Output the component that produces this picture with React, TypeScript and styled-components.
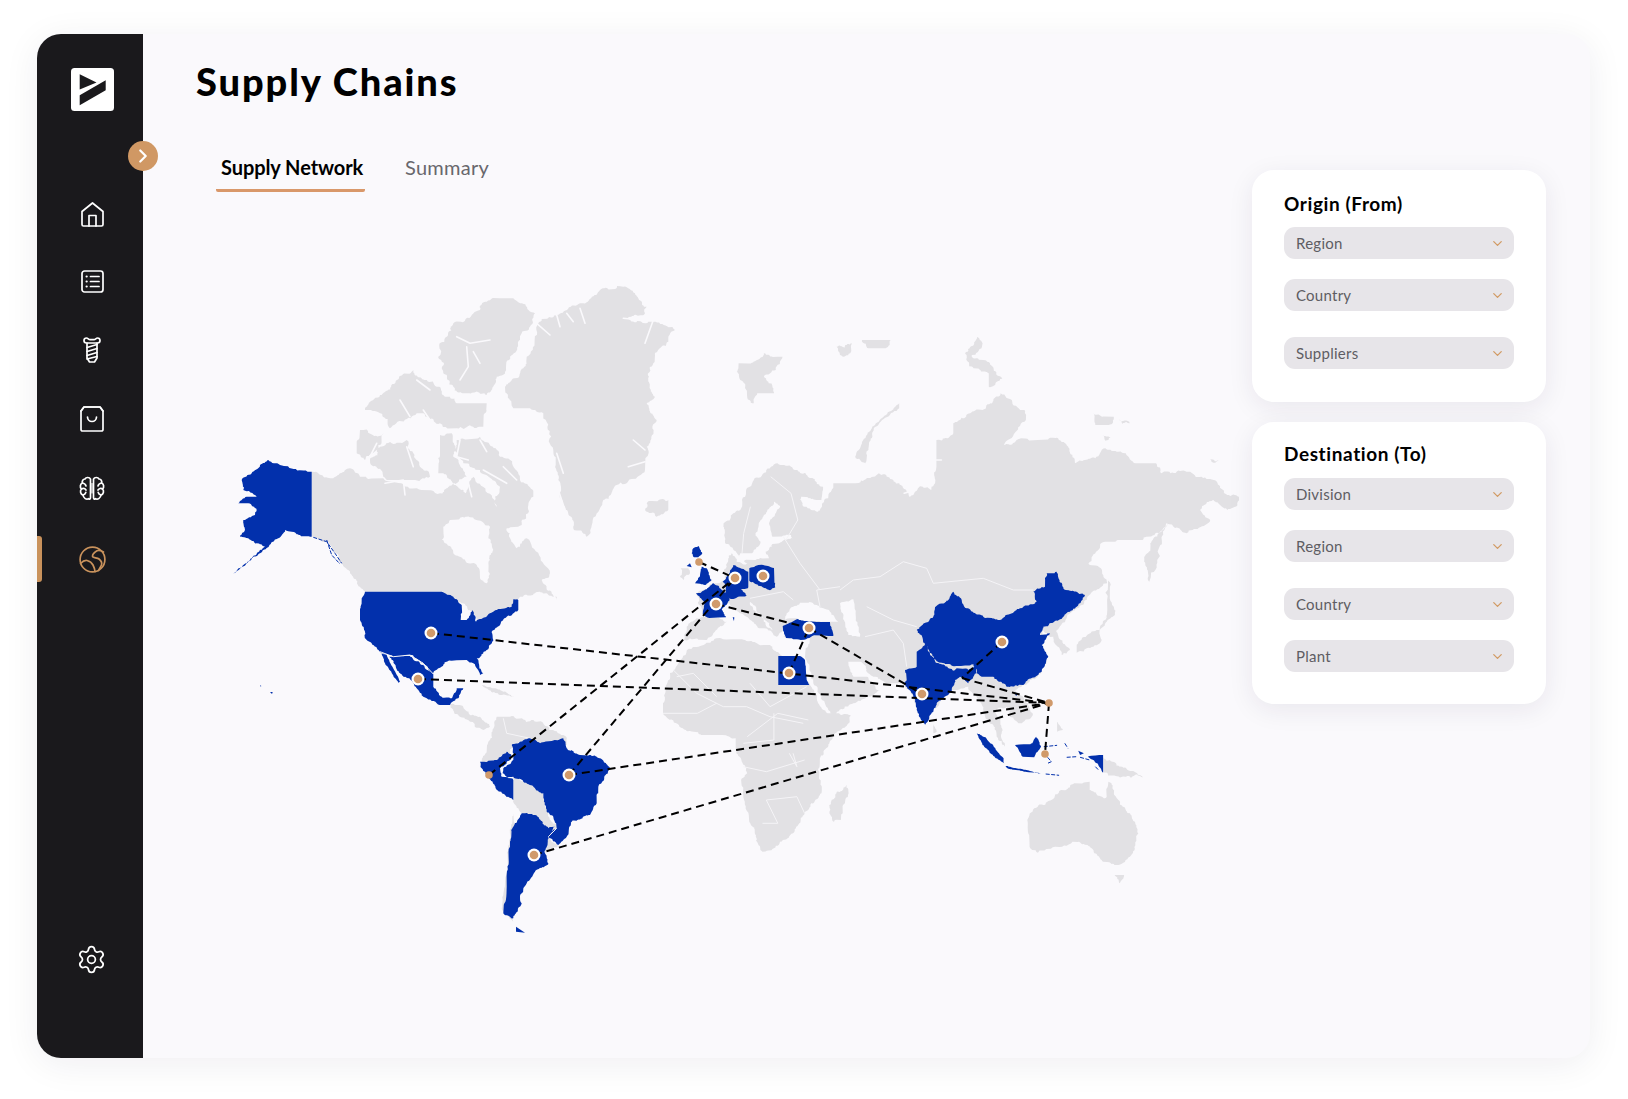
import React from 'react';
import styled, { createGlobalStyle } from 'styled-components';
import { ChevronDown, ChevronRight, Settings } from 'lucide-react';

const Global = createGlobalStyle`
  html, body { margin: 0; padding: 0; background: #ffffff; }
  body { width: 1628px; height: 1099px; overflow: hidden; font-family: "Lato", "Noto Sans", sans-serif; }
  * { box-sizing: border-box; }
`;

const Card = styled.div`
  margin: 34px 38px 0 37px;
  width: 1553px;
  height: 1024px;
  display: flex;
  border-radius: 24px;
  background: #faf9fc;
  box-shadow: 0 6px 36px rgba(30, 20, 50, 0.07);
`;

const Sidebar = styled.aside`
  position: relative;
  width: 106px;
  flex: none;
  display: flex;
  flex-direction: column;
  align-items: center;
  background: #1a191c;
  border-radius: 24px 0 0 24px;
  padding-top: 34px;
`;

const LogoBox = styled.svg`
  width: 43px;
  height: 43px;
  display: block;
  margin-left: 4px;
`;

const CollapseButton = styled.div`
  position: absolute;
  top: 107px;
  right: -15px;
  width: 30px;
  height: 30px;
  border-radius: 50%;
  background: #d09864;
  color: #fff;
  display: flex;
  align-items: center;
  justify-content: center;
  z-index: 2;
`;

const NavList = styled.nav`
  margin-top: 70px;
  width: 100%;
  display: flex;
  flex-direction: column;
  flex: 1;
`;

const NavItem = styled.div<{ $h: number; $active?: boolean }>`
  position: relative;
  height: ${(p) => p.$h}px;
  width: 100%;
  display: flex;
  align-items: center;
  justify-content: center;
  padding-left: 4px;
  color: ${(p) => (p.$active ? '#c9925c' : '#ffffff')};
`;

const ActiveMark = styled.span`
  position: absolute;
  left: 0;
  top: 12px;
  width: 5px;
  height: 46px;
  border-radius: 0 3px 3px 0;
  background: #c9925c;
`;

const SettingsSlot = styled.div`
  margin-top: auto;
  margin-bottom: 83px;
  display: flex;
  justify-content: center;
  color: #fff;
  padding-left: 2px;
`;

const Main = styled.main`
  flex: 1;
  min-width: 0;
  display: flex;
  flex-direction: column;
  border-radius: 0 24px 24px 0;
  padding-top: 25px;
`;

const Title = styled.h1`
  margin: 0 0 47px 53px;
  font-size: 38px;
  line-height: 44px;
  font-weight: 900;
  letter-spacing: 1.9px;
  color: #000;
`;

const Body = styled.div`
  flex: 1;
  display: flex;
  align-items: flex-start;
`;

const MapColumn = styled.section`
  width: 1109px;
  flex: none;
`;

const Tabs = styled.div`
  display: flex;
  height: 42px;
  padding-left: 73px;
`;

const Tab = styled.div<{ $active?: boolean; $w: number }>`
  width: ${(p) => p.$w}px;
  height: 42px;
  padding: 5px 0 0 5px;
  font-size: 20px;
  line-height: 24px;
  font-weight: ${(p) => (p.$active ? 700 : 400)};
  letter-spacing: ${(p) => (p.$active ? '-0.08px' : '0.28px')};
  white-space: nowrap;
  color: ${(p) => (p.$active ? '#000' : '#68676c')};
  border-bottom: 3px solid ${(p) => (p.$active ? '#d9986a' : 'transparent')};
  border-radius: 0 0 2px 2px;
`;

const TabGap = styled.div`
  width: 35px;
`;

const MapCanvas = styled.svg`
  display: block;
  width: 1109px;
  height: 800px;
`;

const Land = styled.path`
  fill: #e2e1e4;
`;

const Water = styled.path`
  fill: #faf9fc;
`;

const Inlet = styled.path`
  fill: none;
  stroke: #faf9fc;
  stroke-width: 1.6;
  stroke-linejoin: round;
  stroke-linecap: round;
`;

const Border = styled.path`
  fill: none;
  stroke: #f5f4f7;
  stroke-width: 1;
  stroke-linejoin: round;
`;

const Country = styled.path`
  fill: #0230ac;
`;

const CoastThread = styled.path`
  fill: none;
  stroke: #0230ac;
  stroke-width: 1;
  stroke-dasharray: 4 1.5;
`;

const Route = styled.line`
  stroke: #000;
  stroke-width: 2;
  stroke-dasharray: 8 5;
`;

const NodeRing = styled.circle`
  fill: #fff;
`;

const NodeDot = styled.circle`
  fill: #d09a6b;
`;

const SideColumn = styled.div`
  width: 294px;
  flex: none;
  margin-top: 20px;
  display: flex;
  flex-direction: column;
  gap: 20px;
`;

const Panel = styled.section<{ $pt: number; $h: number }>`
  height: ${(p) => p.$h}px;
  padding: ${(p) => p.$pt}px 32px 0 32px;
  background: #fff;
  border-radius: 22px;
  box-shadow: 0 6px 26px rgba(40, 30, 70, 0.08);
`;

const PanelTitle = styled.h2`
  margin: 0;
  font-size: 19px;
  line-height: 24px;
  font-weight: 700;
  letter-spacing: 0.6px;
  color: #000;
`;

const Select = styled.div<{ $mt: number }>`
  margin-top: ${(p) => p.$mt}px;
  height: 32px;
  width: 230px;
  display: flex;
  align-items: center;
  justify-content: space-between;
  padding: 0 9px 0 12px;
  border-radius: 11px;
  background: #e7e5e9;
  font-size: 15px;
  letter-spacing: 0.25px;
  color: #5e5d63;
`;

const Caret = styled(ChevronDown)`
  color: #d19a63;
  flex: none;
`;

const LineIcon = styled.svg`
  display: block;
  fill: none;
  stroke: currentColor;
  stroke-width: 1.7;
  stroke-linecap: round;
  stroke-linejoin: round;
`;

type Pt = [number, number];
type Frame = [number, number, number];
const Z4: Frame = [220, 440, 3];
const Z5: Frame = [640, 520, 3];
const Z7: Frame = [640, 680, 2.613];
const Z9: Frame = [340, 280, 3];
const Z10: Frame = [720, 320, 2.958];
const Z11: Frame = [670, 530, 3];

const conv = (o: Frame, a: number[]): Pt[] => {
  const out: Pt[] = [];
  for (let i = 0; i < a.length; i += 2) out.push([o[0] + a[i] / o[2], o[1] + a[i + 1] / 3]);
  return out;
};

let seed = 12345;
const rnd = () => {
  seed = (seed * 1103515245 + 12345) & 0x7fffffff;
  return seed / 0x7fffffff - 0.5;
};

const rough = (pts: Pt[], amp: number): Pt[] => {
  if (amp === 0) return pts;
  let cur = pts;
  for (let it = 0; it < 4; it++) {
    const next: Pt[] = [];
    cur.forEach((p, i) => {
      const q = cur[(i + 1) % cur.length];
      const dx = q[0] - p[0];
      const dy = q[1] - p[1];
      const len = Math.hypot(dx, dy);
      next.push(p);
      const straight = Math.abs(dx) < 0.4 || Math.abs(dy) < 0.4;
      if (len > 2 && !straight) {
        const d = Math.min(len * 0.24, amp) * rnd() * 2;
        next.push([(p[0] + q[0]) / 2 - (dy / len) * d, (p[1] + q[1]) / 2 + (dx / len) * d]);
      }
    });
    cur = next;
  }
  return cur;
};

const toD = (pts: Pt[], close = true) =>
  'M' + pts.map((p) => `${p[0].toFixed(1)} ${p[1].toFixed(1)}`).join('L') + (close ? 'Z' : '');

const area = (o: Frame, a: number[], amp = 2.2) => toD(rough(conv(o, a), amp));
const blue = (o: Frame, a: number[], amp = 0.9) => toD(rough(conv(o, a), amp));
const line = (o: Frame, a: number[]) => toD(conv(o, a), false);

const eurasia: Pt[] = [
  ...conv(Z10, [
    10, 620, 60, 570, 100, 480, 170, 430, 210, 440, 260, 470, 305, 500, 300, 540, 240, 530, 250, 560, 290, 575, 320,
    535, 335, 490, 400, 490, 470, 460, 530, 490, 560, 530, 600, 500, 625, 510, 640, 440, 640, 360, 690, 340, 690, 310,
    740, 280, 800, 250, 830, 220, 900, 270, 905, 300, 840, 375, 890, 355, 940, 360, 1000, 355, 1030, 380, 1050, 430,
    1110, 415, 1140, 385, 1200, 400, 1230, 430, 1290, 430, 1305, 460, 1380, 455, 1460, 480, 1500, 525, 1535, 530, 1530,
    550, 1500, 570, 1460, 540, 1420, 570, 1450, 600, 1380, 640, 1320, 610, 1300, 640, 1250, 660, 1190, 660, 1140, 665,
    1090, 730, 1130, 750, 1145, 790,
  ]),
  ...conv(Z5, [
    1340, 240, 1290, 280, 1250, 330, 1290, 390, 1265, 405, 1240, 350, 1210, 330, 1205, 375, 1225, 410, 1205, 455, 1150,
    495, 1125, 510, 1165, 550, 1175, 590, 1140, 610, 1110, 590, 1100, 560, 1070, 570, 1085, 640, 1095, 680, 1070, 650,
    1050, 610, 1020, 540, 985, 500, 940, 510, 880, 570, 855, 615, 820, 530, 790, 490, 740, 490, 700, 470, 660, 425,
    625, 425, 640, 470, 680, 470, 720, 510, 640, 550, 580, 590, 565, 570, 520, 490, 495, 410, 510, 345, 430, 350,
  ]),
  ...conv(Z11, [
    345, 300, 320, 320, 300, 290, 250, 225, 240, 215, 250, 240, 310, 310, 280, 295, 240, 270, 205, 245, 180, 225, 170,
    215, 135, 262, 170, 275, 130, 310, 110, 330, 60, 325, 40, 330, 50, 290, 80, 265, 105, 260, 78, 190, 110, 180, 130,
    160, 165, 150, 170, 110, 185, 70, 200, 95, 215, 100, 240, 105,
  ]),
  ...conv(Z10, [60, 710, 40, 690, 15, 670]),
];

const hub: Pt = [1049, 703];
const usa: Pt = [431, 633];
const mexico: Pt = [418, 679];
const peru: Pt = [489, 775];
const brazil: Pt = [569, 775];
const argentina: Pt = [534, 855];
const scotland: Pt = [699, 562];
const germany: Pt = [735, 578];
const poland: Pt = [763, 576];
const france: Pt = [716, 604];
const turkey: Pt = [809, 628];
const egypt: Pt = [789, 673];
const india: Pt = [922, 694];
const china: Pt = [1002, 642];
const indonesia: Pt = [1045, 754];
const bangla: Pt = [962, 678];

const routes: [Pt, Pt][] = [
  [usa, hub],
  [mexico, hub],
  [brazil, hub],
  [argentina, hub],
  [peru, germany],
  [brazil, germany],
  [scotland, germany],
  [france, turkey],
  [turkey, india],
  [egypt, turkey],
  [china, bangla],
  [bangla, hub],
  [hub, indonesia],
];

const ringed: Pt[] = [usa, mexico, brazil, argentina, germany, poland, france, turkey, egypt, india, china];
const plain: Pt[] = [peru, scotland, hub, indonesia];

const grayShapes: string[] = [
  // Greenland
  area(Z9, [780, 30, 850, 20, 885, 40, 920, 80, 915, 100, 860, 115, 925, 125, 1005, 150, 985, 185, 945, 225, 925, 300, 945, 350, 920, 370, 950, 420, 920, 500, 915, 570, 830, 615, 790, 660, 740, 770, 700, 745, 675, 680, 655, 600, 640, 510, 610, 400, 570, 385, 520, 385, 495, 320, 540, 280, 560, 230, 595, 130, 650, 105, 720, 70], 3),
  // Arctic Canada
  area(Z9, [340, 130, 420, 90, 440, 65, 520, 55, 585, 100, 545, 160, 510, 230, 470, 290, 440, 345, 380, 340, 340, 320, 310, 280, 295, 230, 320, 170], 4),
  area(Z9, [220, 270, 260, 300, 290, 320, 330, 350, 350, 370, 440, 370, 430, 440, 350, 445, 300, 430, 230, 400, 150, 445, 120, 400, 75, 390, 120, 345, 170, 300], 4),
  area(Z9, [60, 450, 130, 460, 110, 510, 75, 540, 50, 520], 3),
  area(Z9, [120, 500, 200, 480, 240, 560, 270, 590, 180, 600, 130, 590, 90, 540], 4),
  area(Z9, [300, 465, 335, 460, 340, 530, 380, 590, 340, 610, 295, 580, 300, 520], 3),
  area(Z9, [350, 480, 420, 470, 480, 530, 540, 600, 580, 650, 540, 730, 470, 680, 480, 620, 420, 570, 370, 550, 340, 510], 4),
  // Mainland Canada
  toD(rough([
    ...conv(Z4, [275, 95, 340, 115]),
    ...conv(Z9, [0, 580, 30, 565, 60, 590, 130, 595, 190, 615, 300, 640, 340, 610, 375, 640, 400, 590, 470, 680, 530, 690, 545, 735, 500, 745, 530, 805, 560, 775, 630, 880, 605, 900, 650, 960]),
    ...conv(Z4, [1010, 470, 960, 455, 900, 470, 880, 500, 850, 520, 770, 545, 760, 520, 725, 490, 665, 455, 435, 455, 420, 440, 390, 400, 365, 370, 320, 305, 275, 290]),
  ], 1.6)),
  // Iceland, Svalbard, Russian Arctic islands
  area(Z9, [920, 670, 985, 660, 985, 690, 950, 710, 915, 690]),
  area(Z10, [55, 130, 110, 120, 130, 100, 185, 110, 165, 150, 130, 170, 160, 220, 110, 220, 100, 250, 80, 225, 60, 180], 3),
  area(Z10, [530, 250, 510, 270, 450, 320, 420, 370, 400, 410, 430, 430, 440, 380, 460, 320, 530, 265], 1),
  area(Z10, [760, 50, 775, 80, 745, 105, 790, 125, 835, 175, 795, 200, 795, 160, 750, 145, 725, 100]),
  area(Z10, [345, 80, 390, 70, 385, 100, 355, 105], 3),
  area(Z10, [420, 60, 505, 60, 490, 85, 440, 85], 3),
  area(Z10, [1105, 280, 1165, 290, 1150, 315, 1110, 315]),
  area(Z10, [1180, 298, 1212, 310, 1190, 312]),
  area(Z10, [1130, 345, 1155, 352, 1140, 362]),
  area(Z10, [1450, 418, 1478, 422, 1460, 428]),
  // Kamchatka, Sakhalin, Japan
  area(Z10, [1325, 610, 1300, 680, 1270, 785, 1255, 720, 1280, 660]),
  area(Z10, [1148, 755, 1165, 860, 1168, 885, 1135, 895, 1145, 840]),
  area(Z5, [1420, 280, 1380, 320, 1385, 360, 1310, 398, 1310, 380, 1370, 330]),
  // Eurasia
  toD(rough(eurasia, 1.6)),
  // UK Ireland
  area(Z11, [32, 115, 55, 115, 60, 130, 40, 150, 30, 140]),
  // Africa
  toD(rough([
    [720, 638], [745, 640], [770, 645], [778, 652], [810, 685], [818, 703],
    ...conv(Z7, [490, 100, 550, 105, 545, 130, 500, 180, 470, 235, 465, 270, 475, 320, 470, 345, 430, 400, 400, 460, 350, 505, 320, 515, 300, 460, 285, 420, 265, 310, 280, 280, 250, 210, 250, 175, 215, 165, 160, 165, 120, 150, 60, 100, 60, 70]),
    [670, 673], [693, 647],
  ], 1.4)),
  area(Z7, [540, 315, 545, 340, 525, 420, 505, 425, 497, 390, 510, 345]),
  // Sri Lanka, Philippines, New Guinea, Australia
  area(Z5, [880, 612, 890, 635, 880, 640], 0.5),
  area(Z7, [1090, 125, 1105, 150, 1090, 155], 0.5),
  area(Z7, [1210, 228, 1260, 260, 1315, 292, 1270, 290, 1210, 275]),
  area(Z7, [1135, 310, 1175, 305, 1175, 330, 1215, 355, 1225, 305, 1250, 360, 1280, 400, 1302, 460, 1280, 530, 1250, 555, 1210, 545, 1180, 505, 1130, 485, 1040, 518, 1025, 510, 1012, 420, 1030, 385, 1075, 360, 1100, 330], 1.5),
  area(Z7, [1240, 585, 1265, 585, 1252, 610], 0.8),
  // Central America & Caribbean
  area(Z4, [690, 790, 720, 795, 760, 825, 810, 860, 790, 870, 745, 840, 700, 812]),
  area(Z4, [785, 735, 850, 755, 885, 770, 840, 765], 1),
  // South America
  area(Z4, [830, 830, 870, 830, 950, 845, 1030, 885, 1040, 915, 960, 910, 930, 895, 880, 920, 870, 950, 820, 965, 785, 965, 810, 900]),
  area(Z4, [880, 1010, 970, 1060, 985, 1120, 1010, 1165, 985, 1190, 1020, 1215, 975, 1240, 960, 1160, 900, 1115, 880, 1080]),
  area(Z4, [880, 1120, 868, 1200, 860, 1300, 845, 1405, 880, 1445, 862, 1300, 885, 1160], 0.8),
];

const waterShapes: string[] = [
  area(Z9, [330, 720, 380, 710, 450, 740, 445, 775, 460, 810, 450, 840, 440, 910, 420, 895, 410, 855, 340, 820, 305, 780, 310, 740], 1.5),
  area(Z10, [105, 720, 145, 715, 135, 695, 155, 672, 215, 655, 210, 645, 155, 650, 145, 610, 178, 560, 160, 545, 130, 585, 105, 640, 120, 665, 95, 700, 60, 700, 50, 725], 1.2),
  area(Z5, [440, 280, 480, 248, 530, 255, 570, 275, 595, 305, 560, 305, 470, 295, 435, 300], 1.2),
  area(Z5, [600, 250, 640, 238, 660, 350, 625, 345, 610, 290], 1),
];

const inlets: string[] = [
  line(Z9, [590, 130, 630, 165]),
  line(Z9, [650, 105, 660, 140]),
  line(Z9, [680, 100, 700, 125]),
  line(Z9, [720, 85, 735, 130]),
  line(Z9, [850, 115, 900, 120]),
  line(Z9, [940, 120, 915, 190]),
  line(Z9, [880, 480, 915, 510]),
  line(Z9, [865, 560, 915, 545]),
  line(Z9, [650, 520, 670, 580]),
  line(Z9, [655, 630, 675, 690]),
  line(Z9, [350, 170, 390, 190, 450, 180]),
  line(Z9, [380, 200, 385, 260, 360, 300]),
  line(Z9, [400, 215, 420, 250]),
  line(Z9, [180, 360, 210, 410]),
  line(Z9, [230, 300, 270, 330]),
  line(Z9, [250, 390, 270, 420]),
  line(Z9, [135, 610, 190, 600, 195, 645]),
  line(Z9, [385, 610, 395, 650]),
  line(Z9, [430, 570, 500, 610]),
  line(Z9, [110, 490, 90, 530]),
  line(Z9, [200, 500, 220, 560]),
  line(Z9, [360, 480, 350, 530, 385, 540]),
  line(Z9, [420, 480, 440, 515]),
  line(Z9, [490, 560, 530, 600]),
  line(Z10, [580, 400, 600, 420, 655, 420]),
  line(Z10, [545, 520, 580, 510, 590, 475]),
];

const borders: string[] = [
  line(Z5, [600, 210, 640, 180, 720, 170, 790, 125, 860, 145, 880, 190, 1030, 175, 1120, 210, 1180, 210]),
  line(Z5, [680, 260, 760, 300, 830, 320]),
  line(Z5, [675, 350, 760, 330, 790, 370, 800, 440]),
  line(Z5, [600, 200, 530, 210, 540, 260]),
  line(Z5, [430, 50, 480, 130, 540, 210]),
  line(Z5, [330, 235, 430, 215, 460, 240]),
  line(Z10, [150, 470, 210, 520, 230, 600, 195, 660]),
  line(Z10, [90, 560, 70, 640, 65, 700]),
  line(Z7, [60, 100, 150, 100, 200, 70]),
  line(Z7, [270, 190, 350, 180, 350, 100]),
  line(Z7, [330, 360, 360, 430, 320, 430]),
  line(Z7, [330, 360, 410, 350, 430, 400]),
  line(Z7, [390, 220, 410, 260, 400, 220]),
  line(Z7, [270, 260, 330, 275, 430, 240]),
  line(Z7, [280, 170, 360, 100, 440, 120]),
  line(Z5, [100, 450, 170, 520, 250, 560, 320, 560, 390, 590, 490, 610]),
  line(Z5, [330, 490, 390, 560, 500, 500]),
  line(Z4, [1370, 710, 1420, 700, 1490, 770]),
  line(Z4, [850, 835, 860, 880, 930, 895]),
];

const blueShapes: string[] = [
  // Alaska
  blue(Z4, [145, 60, 180, 75, 275, 95, 275, 290, 240, 285, 215, 275, 195, 270, 175, 295, 130, 330, 90, 360, 40, 400, 95, 355, 135, 320, 110, 310, 85, 295, 60, 290, 75, 270, 70, 240, 105, 225, 110, 210, 85, 190, 55, 190, 80, 170, 110, 170, 70, 150, 65, 120, 95, 100, 120, 75]),
  // USA
  blue(Z4, [435, 455, 665, 455, 700, 470, 725, 495, 722, 540, 740, 540, 758, 510, 768, 545, 830, 510, 875, 500, 880, 478, 895, 480, 895, 510, 860, 530, 840, 555, 815, 575, 820, 600, 790, 640, 770, 655, 790, 700, 780, 705, 760, 670, 740, 660, 680, 665, 640, 700, 610, 670, 570, 645, 520, 650, 480, 635, 440, 600, 420, 540, 425, 475]),
  // Mexico
  blue(Z4, [508, 650, 570, 648, 610, 675, 640, 703, 640, 740, 665, 770, 695, 775, 710, 745, 730, 745, 715, 775, 690, 795, 650, 790, 610, 770, 580, 730, 540, 700]),
  blue(Z4, [485, 640, 500, 645, 540, 725, 535, 728, 495, 670], 0.4),
  blue(Z4, [120, 735, 124, 738, 122, 740], 0),
  blue(Z4, [150, 756, 158, 756, 156, 762], 0),
  // Ecuador & Peru
  blue(Z4, [780, 965, 830, 960, 860, 935, 880, 950, 840, 985, 845, 1010, 880, 1020, 880, 1080, 830, 1050, 805, 1010, 785, 985]),
  // Brazil
  blue(Z4, [875, 915, 930, 895, 960, 910, 1030, 895, 1040, 925, 1080, 945, 1130, 950, 1170, 985, 1135, 1040, 1130, 1090, 1110, 1125, 1055, 1145, 1040, 1190, 1015, 1215, 985, 1190, 1010, 1165, 1000, 1130, 980, 1115, 970, 1060, 910, 1025, 880, 1010, 860, 1015, 848, 1000, 850, 985, 880, 960]),
  // Argentina
  blue(Z4, [905, 1120, 945, 1125, 985, 1165, 1005, 1160, 985, 1190, 975, 1240, 985, 1270, 945, 1295, 920, 1330, 900, 1370, 905, 1390, 880, 1435, 850, 1420, 860, 1340, 870, 1220, 880, 1160]),
  blue(Z4, [888, 1460, 915, 1478, 888, 1475], 0),
  // Europe
  blue(Z11, [70, 55, 85, 48, 97, 70, 85, 82, 72, 82, 65, 70], 0.5),
  blue(Z11, [50, 108, 60, 100, 65, 112], 0),
  blue(Z11, [95, 110, 110, 115, 125, 150, 105, 165, 75, 160, 90, 135], 0.6),
  blue(Z11, [110, 178, 130, 160, 172, 192, 178, 212, 155, 240, 168, 262, 118, 264, 98, 252, 103, 215, 78, 190], 0.6),
  blue(Z11, [190, 105, 215, 116, 235, 125, 235, 172, 212, 178, 230, 196, 190, 207, 163, 197, 168, 165, 158, 155, 178, 130], 0.6),
  blue(Z11, [238, 115, 275, 104, 312, 114, 316, 172, 300, 181, 265, 167, 238, 152], 0.6),
  blue(Z11, [188, 262, 193, 262, 192, 274], 0),
  // Turkey & Egypt
  blue(Z5, [428, 318, 470, 298, 530, 306, 570, 306, 580, 348, 522, 346, 482, 360, 438, 354], 0.6),
  blue(Z5, [415, 408, 480, 408, 495, 420, 500, 480, 508, 495, 415, 495], 0.3),
  // India
  blue(Z5, [860, 370, 870, 405, 885, 422, 942, 452, 950, 445, 985, 450, 1015, 430, 1010, 460, 985, 490, 960, 470, 945, 480, 935, 515, 890, 550, 880, 575, 855, 615, 830, 570, 820, 530, 790, 490, 800, 480, 795, 450, 830, 440, 830, 395]),
  // China
  blue(Z5, [940, 215, 965, 240, 980, 265, 1030, 290, 1080, 300, 1140, 265, 1190, 245, 1180, 215, 1215, 200, 1220, 160, 1250, 155, 1270, 205, 1335, 225, 1310, 260, 1270, 290, 1210, 320, 1200, 345, 1230, 340, 1205, 375, 1225, 410, 1205, 455, 1150, 495, 1100, 500, 1060, 470, 1025, 470, 1000, 432, 950, 438, 890, 424, 865, 388, 830, 330, 880, 290, 885, 262, 925, 240]),
  blue(Z5, [1124, 518, 1136, 520, 1128, 528], 0),
  // Indonesia
  blue(Z7, [880, 160, 905, 175, 950, 235, 952, 250, 930, 235, 895, 195], 0.5),
  blue(Z7, [980, 195, 1025, 190, 1035, 170, 1048, 200, 1030, 232, 1000, 230], 0.6),
  blue(Z7, [955, 258, 1000, 268, 1050, 282, 1005, 275, 960, 265], 0.3),
  blue(Z7, [1170, 230, 1210, 225, 1210, 278, 1195, 250], 0.5),
  blue(Z7, [1145, 212, 1160, 220, 1150, 225], 0),
];

const threads: string[] = [
  line(Z4, [280, 292, 320, 305, 345, 340, 365, 370]),
  line(Z4, [320, 300, 335, 345, 360, 372]),
  line(Z7, [1065, 232, 1075, 245, 1065, 250]),
  line(Z7, [1055, 200, 1090, 196]),
  line(Z7, [1115, 232, 1140, 230]),
  line(Z7, [1110, 190, 1118, 205]),
  line(Z7, [1060, 282, 1095, 286]),
  line(Z7, [1150, 232, 1175, 240]),
  line(Z7, [1190, 260, 1200, 272]),
];

const usBorderLines: string[] = [
  line(Z4, [480, 635, 520, 650, 570, 645, 610, 670, 640, 702]),
  line(Z4, [985, 1190, 1010, 1165]),
];

const MapDrawing = () => (
  <MapCanvas viewBox="143 192 1109 800" role="img" aria-label="World map of supply routes">
    {grayShapes.map((d, i) => (
      <Land key={i} d={d} />
    ))}
    {waterShapes.map((d, i) => (
      <Water key={i} d={d} />
    ))}
    {inlets.map((d, i) => (
      <Inlet key={i} d={d} />
    ))}
    {borders.map((d, i) => (
      <Border key={i} d={d} />
    ))}
    {blueShapes.map((d, i) => (
      <Country key={i} d={d} />
    ))}
    {threads.map((d, i) => (
      <CoastThread key={i} d={d} />
    ))}
    {usBorderLines.map((d, i) => (
      <Border key={i} d={d} />
    ))}
    {routes.map(([a, b], i) => (
      <Route key={i} x1={a[0]} y1={a[1]} x2={b[0]} y2={b[1]} />
    ))}
    {ringed.map((p, i) => (
      <g key={i}>
        <NodeRing cx={p[0]} cy={p[1]} r={6.5} />
        <NodeDot cx={p[0]} cy={p[1]} r={4.3} />
      </g>
    ))}
    {plain.map((p, i) => (
      <NodeDot key={i} cx={p[0]} cy={p[1]} r={3.8} />
    ))}
  </MapCanvas>
);

const Logo = () => (
  <LogoBox viewBox="0 0 43 43">
    <rect width="43" height="43" rx="3.5" fill="#fff" />
    <path d="M8.7 6.3 L25.5 14.6 L8.7 21.6 Z M8.7 27.3 L34.7 12.3 V22.3 L8.7 37.3 Z" fill="#1a191c" />
  </LogoBox>
);

const HomeIcon = () => (
  <LineIcon width="23" height="25" viewBox="0 0 23 25">
    <path d="M1 9.5 L11.5 1 L22 9.5 V22.5 a1.5 1.5 0 0 1 -1.5 1.5 H2.5 A1.5 1.5 0 0 1 1 22.5 Z" />
    <path d="M8 24 V13.5 H15 V24" />
  </LineIcon>
);

const ListIcon = () => (
  <LineIcon width="23" height="23" viewBox="0 0 23 23">
    <rect x="1" y="1" width="21" height="21" rx="2.5" />
    <path d="M9.5 6.5 H18 M9.5 11.5 H18 M9.5 16.5 H18" />
    <path d="M5.6 6.5 H5.7 M5.6 11.5 H5.7 M5.6 16.5 H5.7" strokeWidth="2.2" />
  </LineIcon>
);

const ScrewIcon = () => (
  <LineIcon width="18" height="26" viewBox="0 0 18 26">
    <path d="M3.5 1 C2 1 1 2 1 3.6 C1 5.2 2 6 3.5 6 H14.5 C16 6 17 5.2 17 3.6 C17 2 16 1 14.5 1 C13 1 12.5 2.6 11 2.6 H7 C5.5 2.6 5 1 3.5 1 Z" />
    <path d="M4 6 V21 L6.5 25 H11.5 L14 21 V6" />
    <path d="M4 10.5 L14 7.5 M4 14.5 L14 11.5 M4 18.5 L14 15.5 M4 22 L14 19.5" />
  </LineIcon>
);

const BagIcon = () => (
  <LineIcon width="24" height="26" viewBox="0 0 24 26">
    <path d="M4 1 H20 L23 5 V23.5 a1.5 1.5 0 0 1 -1.5 1.5 H2.5 A1.5 1.5 0 0 1 1 23.5 V5 Z" />
    <path d="M1 5 L4 1 H20 L23 5" />
    <path d="M7.5 11 a4.5 4.5 0 0 0 9 0" />
  </LineIcon>
);

const brainLobe =
  'M11.5 3.2 C10.5 1.2 7.2 0.8 6 3 C4 3 2.8 5 3.4 7 C1.2 8 0.6 11 2.4 13 C0.8 15 1.4 18.4 4 19 C4.4 22.2 7.6 24.2 9.6 22.6 C10.6 23.8 11.5 23 11.5 21.6 Z';

const BrainIcon = () => (
  <LineIcon width="26" height="25" viewBox="0 0 26 25">
    <path d={brainLobe} />
    <path d={brainLobe} transform="matrix(-1 0 0 1 26 0)" />
    <path d="M3.4 7 C5 7.2 6.6 8.2 7 10 M2.4 13 C4 12 6 12.4 7 14 M4 19 C5.2 18.6 6.4 17.6 6.8 16.4" />
    <path d="M22.6 7 C21 7.2 19.4 8.2 19 10 M23.6 13 C22 12 20 12.4 19 14 M22 19 C20.8 18.6 19.6 17.6 19.2 16.4" />
    <path d="M13 7.5 V17" strokeWidth="1.2" />
  </LineIcon>
);

const GlobeIcon = () => (
  <LineIcon width="27" height="27" viewBox="0 0 27 27">
    <circle cx="13.5" cy="13.5" r="12.4" />
    <path d="M1.5 17.5 C3.5 15.5 5.5 14 8 14.5 C11 15.2 13 17 14 19 C15 21 15.8 23 16 25.5" />
    <path d="M24.5 6 C22 4.6 19.5 4 18 4.8 C16 6 13.5 8.5 13.5 10.2 C13.5 12 18 11.5 20 13 C22.5 15 23 17.5 22.5 19 C22 20.5 20.5 22 19.5 24.5" />
  </LineIcon>
);

const App = () => (
  <>
    <Global />
    <Card>
      <Sidebar>
        <Logo />
        <CollapseButton>
          <ChevronRight size={22} strokeWidth={2.4} />
        </CollapseButton>
        <NavList>
          <NavItem $h={67}>
            <HomeIcon />
          </NavItem>
          <NavItem $h={66}>
            <ListIcon />
          </NavItem>
          <NavItem $h={72}>
            <ScrewIcon />
          </NavItem>
          <NavItem $h={66}>
            <BagIcon />
          </NavItem>
          <NavItem $h={72}>
            <BrainIcon />
          </NavItem>
          <NavItem $h={70} $active>
            <ActiveMark />
            <GlobeIcon />
          </NavItem>
          <SettingsSlot>
            <Settings size={31} strokeWidth={1.35} />
          </SettingsSlot>
        </NavList>
      </Sidebar>
      <Main>
        <Title>Supply Chains</Title>
        <Body>
          <MapColumn>
            <Tabs>
              <Tab $active $w={149}>
                Supply Network
              </Tab>
              <TabGap />
              <Tab $w={100}>Summary</Tab>
            </Tabs>
            <MapDrawing />
          </MapColumn>
          <SideColumn>
            <Panel $pt={22} $h={232}>
              <PanelTitle>Origin (From)</PanelTitle>
              <Select $mt={11}>
                Region
                <Caret size={15} strokeWidth={2} />
              </Select>
              <Select $mt={20}>
                Country
                <Caret size={15} strokeWidth={2} />
              </Select>
              <Select $mt={26}>
                Suppliers
                <Caret size={15} strokeWidth={2} />
              </Select>
            </Panel>
            <Panel $pt={20} $h={282}>
              <PanelTitle>Destination (To)</PanelTitle>
              <Select $mt={12}>
                Division
                <Caret size={15} strokeWidth={2} />
              </Select>
              <Select $mt={20}>
                Region
                <Caret size={15} strokeWidth={2} />
              </Select>
              <Select $mt={26}>
                Country
                <Caret size={15} strokeWidth={2} />
              </Select>
              <Select $mt={20}>
                Plant
                <Caret size={15} strokeWidth={2} />
              </Select>
            </Panel>
          </SideColumn>
        </Body>
      </Main>
    </Card>
  </>
);

export default App;
